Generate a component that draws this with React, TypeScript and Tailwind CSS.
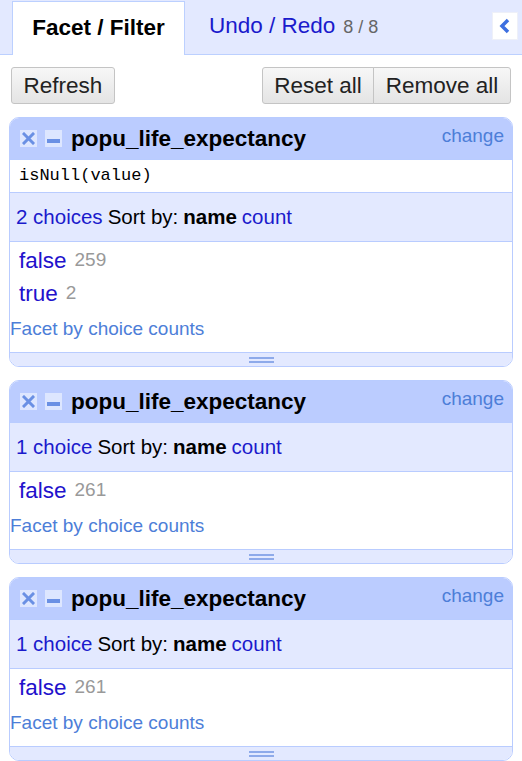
const FONT = { fontFamily: '"Liberation Sans", Arial, sans-serif' };

interface Choice {
  name: string;
  count: number;
}

interface FacetProps {
  title: string;
  expression?: string;
  choices: Choice[];
}

const HeaderIcons = () => (
  <div className="flex items-center gap-[8px]">
    <div className="flex h-[17px] w-[17px] items-center justify-center bg-[#dde6ff]">
      <svg width="13" height="13" viewBox="0 0 13 13">
        <path d="M2 2 L11 11 M11 2 L2 11" stroke="#6a90e4" strokeWidth="3" strokeLinecap="square" />
      </svg>
    </div>
    <div className="flex h-[17px] w-[17px] items-end justify-center bg-[#dde6ff] pb-[4px]">
      <div className="h-[4px] w-[13px] bg-[#6a90e4]" />
    </div>
  </div>
);

const Facet = ({ title, expression, choices }: FacetProps) => (
  <div className="mx-[9px] overflow-hidden rounded-[10px] border border-[#b9ccff]">
    <div className="flex h-[41px] items-center bg-[#bbccff] pl-[10px] pr-[8px]">
      <HeaderIcons />
      <span className="ml-[9px] text-[22.5px] font-bold text-black">{title}</span>
      <span className="ml-auto -mt-[5px] text-[19px] text-[#4d7ed8]">change</span>
    </div>
    {expression && (
      <div className="flex h-[33px] items-center border-t border-[#b9ccff] bg-white pl-[9px]">
        <span className="text-[17px] text-black" style={{ fontFamily: '"Liberation Mono", monospace' }}>
          {expression}
        </span>
      </div>
    )}
    <div className="flex h-[50px] items-center border-y border-[#b9ccff] bg-[#e3e9ff] pl-[6px] text-[20.5px]">
      <span className="text-[#1a1acc]">
        {choices.length} {choices.length === 1 ? "choice" : "choices"}
      </span>
      <span className="ml-[5px] text-black">Sort by:</span>
      <span className="ml-[5px] font-bold text-black">name</span>
      <span className="ml-[5px] text-[#1a1acc]">count</span>
    </div>
    <div className="flex flex-col bg-white pt-[2px] pb-[10px]">
      {choices.map((c) => (
        <div key={c.name} className="flex h-[33px] items-center pl-[9px]">
          <span className="text-[22.5px] text-[#2211cc]">{c.name}</span>
          <span className="ml-[8px] text-[19px] text-[#999999]">{c.count}</span>
        </div>
      ))}
      <div className="mt-[6px] flex h-[26px] items-center text-[19px] text-[#4d7ed8]">Facet by choice counts</div>
    </div>
    <div className="flex h-[14px] items-center justify-center border-t border-[#b9ccff] bg-[#e3e9ff]">
      <div className="flex w-[25px] flex-col gap-[2px]">
        <div className="h-[2px] bg-[#8eaaea]" />
        <div className="h-[2px] bg-[#8eaaea]" />
      </div>
    </div>
  </div>
);

const Button = ({ label, className }: { label: string; className: string }) => (
  <div
    className={`flex h-[37px] items-center justify-center border border-[#c4c4c4] bg-gradient-to-b from-[#f7f7f7] to-[#e4e4e4] text-[22.5px] text-[#222] ${className}`}
  >
    {label}
  </div>
);

export default function App() {
  return (
    <div className="h-[761px] w-[522px] overflow-hidden bg-white" style={FONT}>
      <div className="flex h-[55px] items-end border-b border-[#bcd0ff] bg-[#e3e9ff] pl-[12px]">
        <div className="-mb-px flex h-[54px] w-[173px] items-center justify-center border border-b-0 border-[#bcd0ff] bg-white pb-[2px] text-[22.5px] font-bold text-black">
          Facet / Filter
        </div>
        <div className="ml-[24px] flex h-[54px] items-center pb-[2px]">
          <span className="text-[22.5px] text-[#1a1acc]">Undo / Redo</span>
          <span className="ml-[8px] mt-[2px] text-[18px] text-[#666]">8 / 8</span>
        </div>
        <div className="ml-auto mr-[4px] mb-[14px] flex h-[28px] w-[26px] items-center justify-center border border-[#eef0f8] bg-white">
          <svg width="14" height="18" viewBox="0 0 14 18">
            <path d="M10 3 L4 9 L10 15" fill="none" stroke="#3d6fe0" strokeWidth="3.5" />
          </svg>
        </div>
      </div>
      <div className="mt-[12px] flex justify-between px-[11px]">
        <Button label="Refresh" className="w-[104px] rounded-[3px]" />
        <div className="flex">
          <Button label="Reset all" className="w-[112px] rounded-l-[3px]" />
          <Button label="Remove all" className="-ml-px w-[138px] rounded-r-[3px]" />
        </div>
      </div>
      <div className="mt-[13px] flex flex-col gap-[13px]">
        <Facet
          title="popu_life_expectancy"
          expression="isNull(value)"
          choices={[
            { name: "false", count: 259 },
            { name: "true", count: 2 },
          ]}
        />
        <Facet title="popu_life_expectancy" choices={[{ name: "false", count: 261 }]} />
        <Facet title="popu_life_expectancy" choices={[{ name: "false", count: 261 }]} />
      </div>
    </div>
  );
}
